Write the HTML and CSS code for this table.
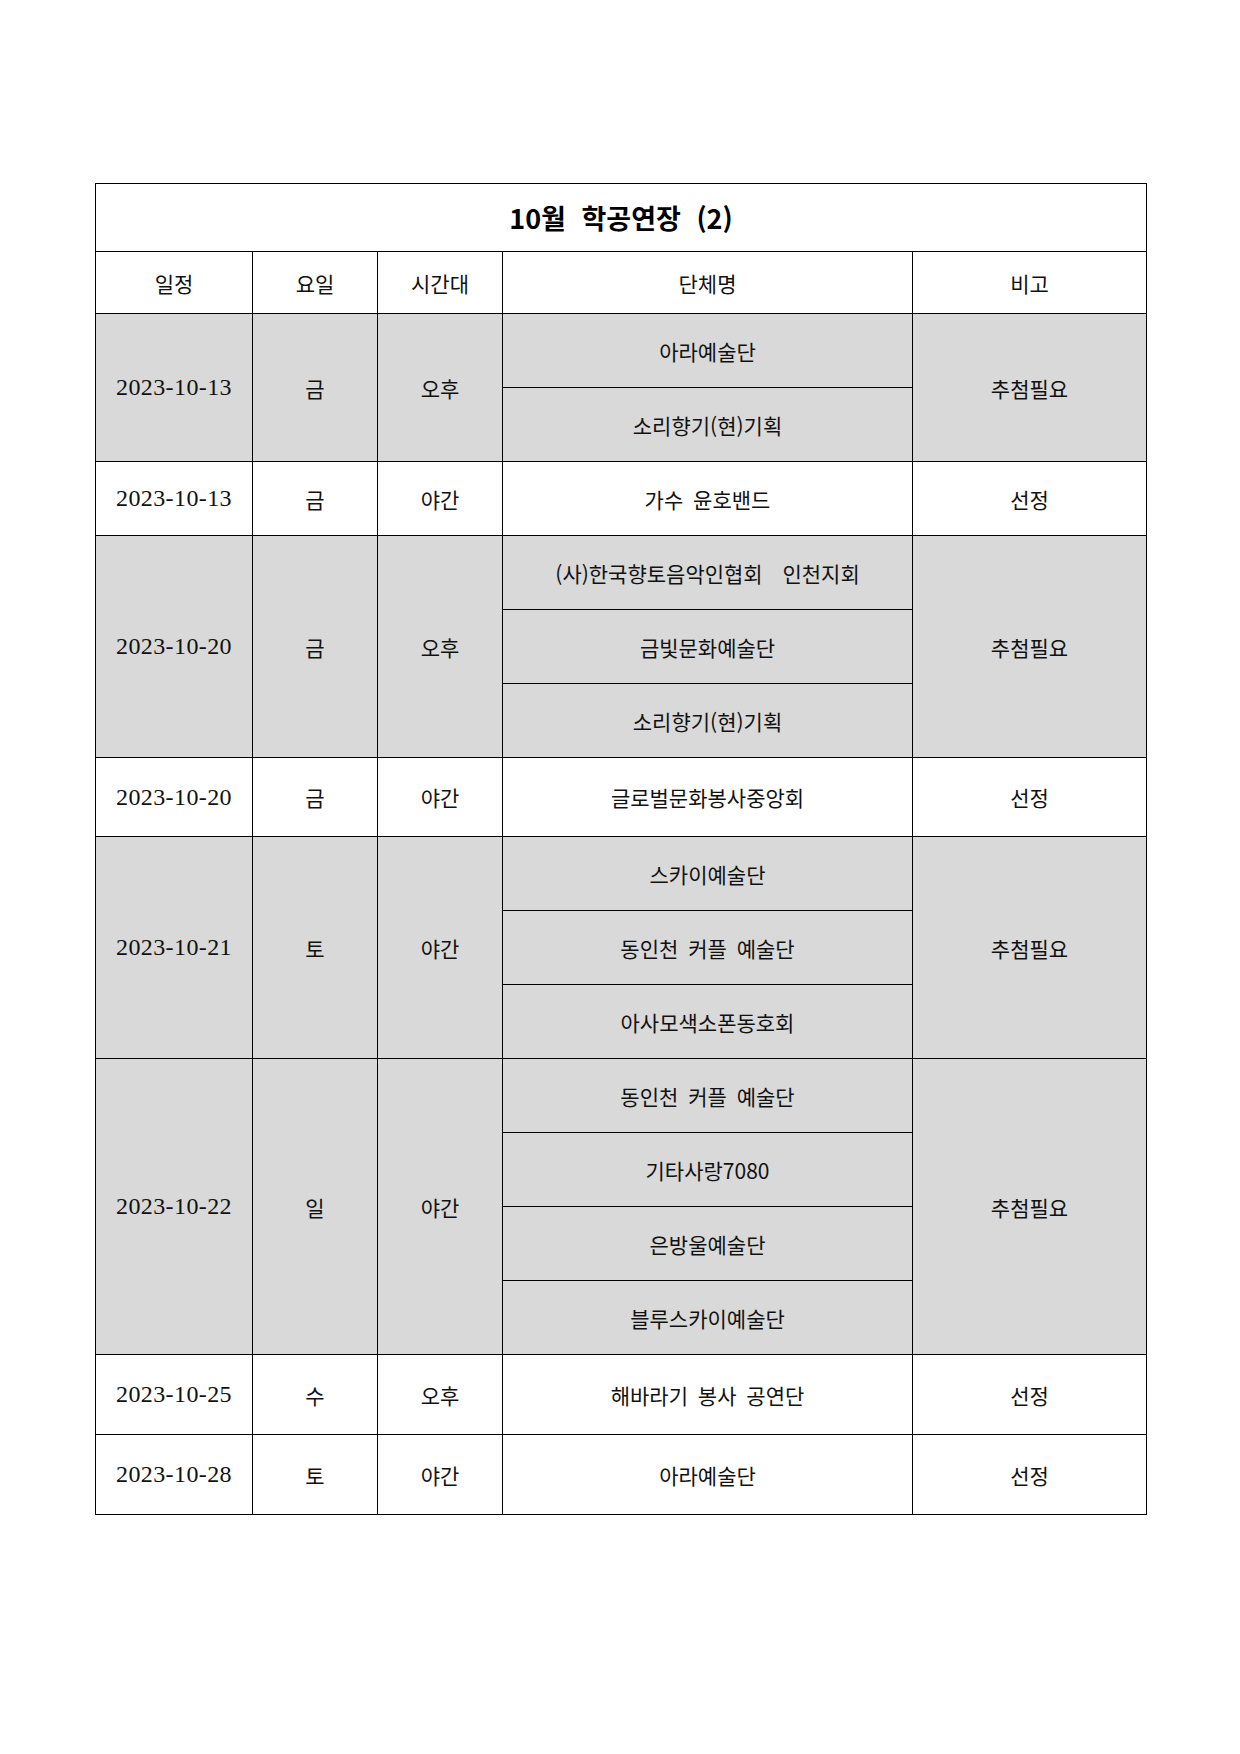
FILE: index.html
```html
<!DOCTYPE html>
<html lang="ko">
<head>
<meta charset="utf-8">
<title>10월 학공연장 (2)</title>
<link rel="stylesheet" href="styles.css">
</head>
<body>
<table class="schedule">
  <colgroup>
    <col class="c-date"><col class="c-day"><col class="c-time"><col class="c-name"><col class="c-note">
  </colgroup>
  <tr class="r-title"><th colspan="5" class="title">10월 학공연장 (2)</th></tr>
  <tr class="r-head"><th>일정</th><th>요일</th><th>시간대</th><th>단체명</th><th>비고</th></tr>

  <tr class="r-sub shade"><td rowspan="2" class="date">2023-10-13</td><td rowspan="2">금</td><td rowspan="2">오후</td><td>아라예술단</td><td rowspan="2">추첨필요</td></tr>
  <tr class="r-sub shade"><td>소리향기(현)기획</td></tr>

  <tr class="r-sub"><td class="date">2023-10-13</td><td>금</td><td>야간</td><td>가수 윤호밴드</td><td>선정</td></tr>

  <tr class="r-sub shade"><td rowspan="3" class="date">2023-10-20</td><td rowspan="3">금</td><td rowspan="3">오후</td><td>(사)한국향토음악인협회&nbsp; 인천지회</td><td rowspan="3">추첨필요</td></tr>
  <tr class="r-sub shade"><td>금빛문화예술단</td></tr>
  <tr class="r-sub shade"><td>소리향기(현)기획</td></tr>

  <tr class="r-single"><td class="date">2023-10-20</td><td>금</td><td>야간</td><td>글로벌문화봉사중앙회</td><td>선정</td></tr>

  <tr class="r-sub shade"><td rowspan="3" class="date">2023-10-21</td><td rowspan="3">토</td><td rowspan="3">야간</td><td>스카이예술단</td><td rowspan="3">추첨필요</td></tr>
  <tr class="r-sub shade"><td>동인천 커플 예술단</td></tr>
  <tr class="r-sub shade"><td>아사모색소폰동호회</td></tr>

  <tr class="r-sub shade"><td rowspan="4" class="date">2023-10-22</td><td rowspan="4">일</td><td rowspan="4">야간</td><td>동인천 커플 예술단</td><td rowspan="4">추첨필요</td></tr>
  <tr class="r-sub shade"><td>기타사랑7080</td></tr>
  <tr class="r-sub shade"><td>은방울예술단</td></tr>
  <tr class="r-sub shade"><td>블루스카이예술단</td></tr>

  <tr class="r-last"><td class="date">2023-10-25</td><td>수</td><td>오후</td><td>해바라기 봉사 공연단</td><td>선정</td></tr>
  <tr class="r-last"><td class="date">2023-10-28</td><td>토</td><td>야간</td><td>아라예술단</td><td>선정</td></tr>
</table>
</body>
</html>
```

FILE: styles.css
```css
html, body {
  margin: 0;
  padding: 0;
  background: #ffffff;
}

body {
  padding: 183px 0 0 95px;
  font-family: "Noto Sans CJK KR", "Noto Sans", sans-serif;
  color: #111111;
}

.schedule {
  border-collapse: collapse;
  table-layout: fixed;
  width: 1052px;
}

.c-date { width: 157px; }
.c-day { width: 125px; }
.c-time { width: 125px; }
.c-name { width: 410px; }
.c-note { width: 234px; }

.schedule th,
.schedule td {
  border: 1px solid #000000;
  padding: 0;
  text-align: center;
  vertical-align: middle;
  font-size: 21px;
  font-weight: 400;
  word-spacing: 4px;
}

.schedule .title {
  font-size: 27px;
  font-weight: 700;
  word-spacing: 8px;
  color: #000000;
}

.r-title { height: 68px; }
.r-head { height: 62px; }
.r-sub { height: 74px; }
.r-single { height: 79px; }
.r-last { height: 80px; }

.shade td { background: #d9d9d9; }

.schedule .date {
  font-family: "Liberation Serif", "Noto Sans CJK KR", serif;
  font-size: 24px;
  letter-spacing: 0.4px;
  word-spacing: 0;
}
```
